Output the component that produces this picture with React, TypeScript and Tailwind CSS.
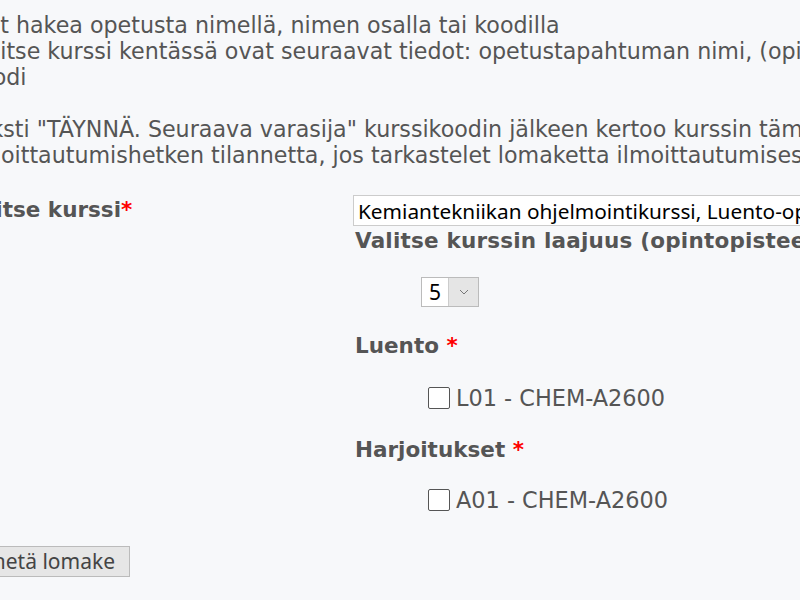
import React from 'react'

const body = { fontFamily: '"DejaVu Sans", Verdana, sans-serif' }
const control = { fontFamily: '"Noto Sans", "Open Sans", sans-serif' }

function Req() {
  return <span className="text-[#ff0000]">*</span>
}

function Checkbox({ label }: { label: string }) {
  return (
    <label className="flex items-center gap-[6px] pl-[75px]">
      <span className="w-[22px] h-[22px] border border-[#555] rounded-[2px] bg-white shrink-0" />
      <span>{label}</span>
    </label>
  )
}

export default function App() {
  return (
    <div className="min-h-screen w-[800px] h-[600px] overflow-hidden bg-[#f7f8fa] text-[#555] text-[22.2px] leading-[26px]" style={body}>
      <div className="ml-[-33px] pt-[12px] w-[1300px]">
        <p>Voit hakea opetusta nimellä, nimen osalla tai koodilla</p>
        <p>Valitse kurssi kentässä ovat seuraavat tiedot: opetustapahtuman nimi, (opintopisteet), kurssin</p>
        <p>koodi</p>
        <p className="mt-[26px]">Teksti "TÄYNNÄ. Seuraava varasija" kurssikoodin jälkeen kertoo kurssin tämänhetkisen</p>
        <p>ilmoittautumishetken tilannetta, jos tarkastelet lomaketta ilmoittautumisessa</p>

        <div className="flex mt-[27px]">
          <div className="w-[386px] shrink-0 font-bold text-[21.5px] pt-[2px]">
            <span className="relative left-[-9px]">Valitse kurssi<Req /></span>
          </div>
          <div className="flex flex-col text-[21.5px]">
            <div className="h-[31px] w-[700px] border border-[#ccc] bg-white text-black text-[20.8px] flex items-center pl-[4px] whitespace-nowrap" style={control}>
              Kemiantekniikan ohjelmointikurssi, Luento-opetus (5 op), CHEM-A2600
            </div>
            <div className="font-bold pl-[2px] leading-[30px] tracking-[0.2px]">Valitse kurssin laajuus (opintopisteet)</div>
            <div className="pl-[68px] mt-[21px]">
              <div className="inline-flex h-[30px] border border-[#bbb] bg-white" style={control}>
                <span className="w-[26px] text-black flex items-center justify-center text-[21px]">5</span>
                <span className="w-[30px] bg-[#e5e5e5] border-l border-[#ccc] flex items-center justify-center">
                  <svg width="10" height="6" viewBox="0 0 10 6" fill="none" stroke="#777" strokeWidth="1">
                    <path d="M1 1l4 4 4-4" />
                  </svg>
                </span>
              </div>
            </div>
            <div className="font-bold pl-[2px] mt-[26px]">
              Luento <Req />
            </div>
            <div className="mt-[26px] text-[22.4px]">
              <Checkbox label="L01 - CHEM-A2600" />
            </div>
            <div className="font-bold pl-[2px] mt-[26px]">
              Harjoitukset <Req />
            </div>
            <div className="mt-[24px] text-[22.4px]">
              <Checkbox label="A01 - CHEM-A2600" />
            </div>
          </div>
        </div>

        <div className="mt-[33px] ml-[-12px]">
          <button className="h-[31px] px-[14px] bg-[#e6e6e6] border border-[#bbb] text-[#444] text-[21px] leading-[29px]" style={control}>
            Lähetä lomake
          </button>
        </div>
      </div>
    </div>
  )
}
